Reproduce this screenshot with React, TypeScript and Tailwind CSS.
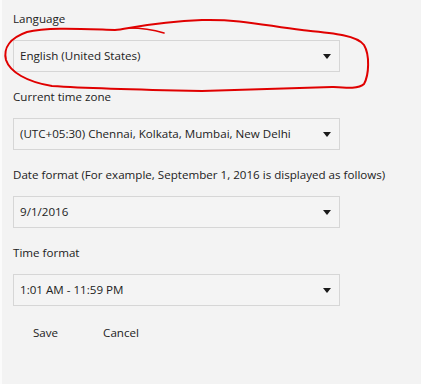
import React from "react";

type Field = {
	label: string;
	value: string;
};

const fields: Field[] = [
	{ label: "Language", value: "English (United States)" },
	{ label: "Current time zone", value: "(UTC+05:30) Chennai, Kolkata, Mumbai, New Delhi" },
	{
		label: "Date format (For example, September 1, 2016 is displayed as follows)",
		value: "9/1/2016",
	},
	{ label: "Time format", value: "1:01 AM - 11:59 PM" },
];

const SelectBox: React.FC<{ value: string }> = ({ value }) => (
	<div className="flex h-8 w-[327px] items-center justify-between border border-[#d6d6d6] bg-[#f4f4f4] pl-[6px] pr-2">
		<span>{value}</span>
		<span className="h-0 w-0 border-x-4 border-t-[5px] border-x-transparent border-t-[#1a1a1a]" />
	</div>
);

export default function App() {
	return (
		<div className="relative h-[384px] w-[421px] overflow-hidden border-l-2 border-[#fbfbfb] bg-[#f3f3f3] pl-[11px] pt-[11px] font-['Segoe_UI','Open_Sans',sans-serif] text-[11.6px] leading-4 text-[#222]">
			{fields.map((field, i) => (
				<div key={field.label} className={i > 0 ? "mt-[17px]" : ""}>
					<div className="mb-[13px]">{field.label}</div>
					<SelectBox value={field.value} />
				</div>
			))}

			<div className="mt-[11px] flex gap-[5px]">
				<button className="h-8 px-5">Save</button>
				<button className="h-8 px-5">Cancel</button>
			</div>

			{/* hand-drawn annotation */}
			<svg
				className="pointer-events-none absolute left-0 top-0"
				width="421"
				height="100"
				viewBox="0 0 421 100"
				fill="none">
				<path
					d="M113,30 C125,29 150,22 200,20 C240,19 265,26 300,30 C330,33 355,35 362,45 C368,55 367,75 362,84 C357,89 345,88 330,87 C290,88 240,90 200,91 C150,90 80,88 50,86 C25,82 8,72 4,60 C1,48 8,38 25,32 C45,27 80,29 113,30"
					stroke="#e00000"
					strokeWidth="2"
					strokeLinecap="round"
				/>
				<path
					d="M162,33 C152,30 140,28 127,28"
					stroke="#e00000"
					strokeWidth="1.6"
					strokeLinecap="round"
				/>
			</svg>
		</div>
	);
}
